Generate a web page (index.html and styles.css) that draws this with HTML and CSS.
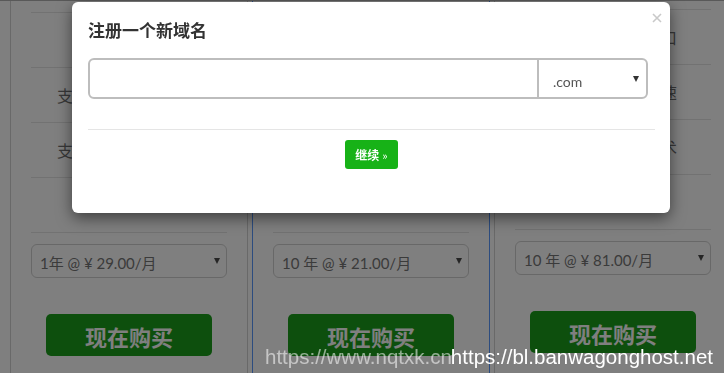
FILE: index.html
```html
<!DOCTYPE html>
<html lang="zh-CN">
<head>
<meta charset="utf-8">
<title>注册一个新域名</title>
<link rel="stylesheet" href="styles.css">
</head>
<body>
<div class="page">
  <div class="plans">
    <div class="plan">
      <ul class="features">
        <li>全固态硬盘存储</li>
        <li>支持支付宝微信付款</li>
        <li>支持全天候技术支持</li>
        <li></li>
      </ul>
      <div class="term"><span>1年 @ ¥ 29.00/月</span><span class="caret"></span></div>
      <a class="buy" href="#">现在购买</a>
    </div>
    <div class="plan plan--active">
      <ul class="features">
        <li>全固态硬盘存储</li>
        <li>支持支付宝微信付款</li>
        <li>支持全天候技术支持</li>
        <li></li>
      </ul>
      <div class="term"><span>10 年 @ ¥ 21.00/月</span><span class="caret"></span></div>
      <a class="buy" href="#">现在购买</a>
    </div>
    <div class="plan plan--shift">
      <ul class="features">
        <li>千兆共享网络端口</li>
        <li>全球机房线路加速</li>
        <li>提供专业售后技术</li>
        <li></li>
      </ul>
      <div class="term"><span>10 年 @ ¥ 81.00/月</span><span class="caret"></span></div>
      <a class="buy" href="#">现在购买</a>
    </div>
  </div>
</div>

<div class="backdrop"></div>

<div class="modal">
  <div class="modal-title">注册一个新域名</div>
  <button class="close" type="button" aria-label="关闭">
    <svg width="10" height="10" viewBox="0 0 10 10"><path d="M1 1 L9 9 M9 1 L1 9" stroke="#c9c9c9" stroke-width="1.6" fill="none"/></svg>
  </button>
  <div class="domain-group">
    <div class="domain-input"></div>
    <div class="domain-tld"><span>.com</span><span class="tld-caret"></span></div>
  </div>
  <div class="modal-rule"></div>
  <div class="modal-actions">
    <a class="continue" href="#">继续<span class="raquo">»</span></a>
  </div>
</div>

<div class="watermark"><span class="wm-faint">https://www.nqtxk.cn</span><span class="wm-solid">https://bl.banwagonghost.net</span></div>
</body>
</html>
```
FILE: styles.css
```css
* { box-sizing: border-box; }
html, body { margin: 0; height: 100%; }
body {
  background: #fff;
  font-family: "Noto Sans CJK SC", "Noto Sans", sans-serif;
  overflow: hidden;
  position: relative;
}

.page {
  height: 100%;
  border-top: 1px solid #b2b2b2;
  overflow: hidden;
}
.plans {
  display: flex;
  align-items: flex-start;
  gap: 4px;
  padding-left: 10px;
}
.plan {
  flex: 0 0 238px;
  min-height: 480px;
  border: 1px solid #d2d2d2;
  border-top: 0;
  padding: 11px 20px 0;
}
.plan--active { border-color: #5898ff; }
.plan--shift { padding-top: 8px; }

.features {
  list-style: none;
  margin: 0;
  padding: 0;
  border-top: 1px solid #e4e4e4;
}
.features li {
  height: 55px;
  border-bottom: 1px solid #e4e4e4;
  display: flex;
  align-items: center;
  justify-content: center;
  white-space: nowrap;
  font-size: 16px;
  color: #707070;
}

.term {
  margin-top: 11px;
  height: 34px;
  border: 1px solid #d0d0d0;
  border-radius: 6px;
  display: flex;
  align-items: center;
  padding: 2px 6px 0 8px;
  font: 15px "Lato", "Noto Sans CJK SC", sans-serif;
  color: #767676;
  white-space: nowrap;
}
.caret {
  margin-left: auto;
  margin-top: -3px;
  border-left: 3px solid transparent;
  border-right: 3px solid transparent;
  border-top: 6px solid #4a4a4a;
}

.buy {
  display: flex;
  align-items: center;
  justify-content: center;
  width: 166px;
  height: 42px;
  margin: 36px auto 0;
  background: #1a9e1a;
  border-radius: 5px;
  color: #fff;
  font-size: 22px;
  font-weight: 700;
  text-decoration: none;
  padding-top: 2px;
}

.backdrop {
  position: fixed;
  inset: 0;
  background: rgba(0, 0, 0, 0.5);
}

.modal {
  position: absolute;
  left: 72px;
  top: 2px;
  width: 598px;
  height: 211px;
  background: #fff;
  border-radius: 6px;
  box-shadow: 0 5px 15px rgba(0, 0, 0, 0.5);
  padding: 16px 15px 0 16px;
}
.modal-title {
  font-size: 17px;
  line-height: 24px;
  font-weight: 700;
  color: #333;
}
.close {
  position: absolute;
  left: 580px;
  top: 11px;
  padding: 0;
  border: 0;
  background: none;
  width: 10px;
  height: 10px;
  line-height: 0;
}
.domain-group {
  margin-top: 16px;
  width: 560px;
  height: 41px;
  border: 2px solid #bdbdbd;
  border-radius: 6px;
  display: flex;
}
.domain-input { flex: 1; }
.domain-tld {
  width: 109px;
  border-left: 2px solid #bdbdbd;
  display: flex;
  align-items: flex-start;
  padding: 12px 7px 0 14px;
  font: 14px/20px "Lato", sans-serif;
  color: #555;
}
.tld-caret {
  margin-left: auto;
  margin-top: 4px;
  border-left: 3px solid transparent;
  border-right: 3px solid transparent;
  border-top: 6px solid #333;
}
.modal-rule {
  margin-top: 30px;
  border-top: 1px solid #e5e5e5;
}
.modal-actions {
  display: flex;
  justify-content: center;
  padding-top: 10px;
}
.continue {
  display: flex;
  align-items: center;
  justify-content: center;
  gap: 3px;
  width: 53px;
  height: 29px;
  background: #17b217;
  border-radius: 3px;
  color: #fff;
  font-size: 12px;
  font-weight: 700;
  text-decoration: none;
  white-space: nowrap;
}
.raquo { font-size: 11px; font-weight: 400; }

.watermark {
  position: absolute;
  left: 265px;
  top: 345px;
  font: 20.5px/24px "Liberation Sans", Arial, sans-serif;
  white-space: nowrap;
}
.wm-faint { color: rgba(255, 255, 255, 0.55); }
.wm-solid { color: #fff; margin-left: -1px; }
```
